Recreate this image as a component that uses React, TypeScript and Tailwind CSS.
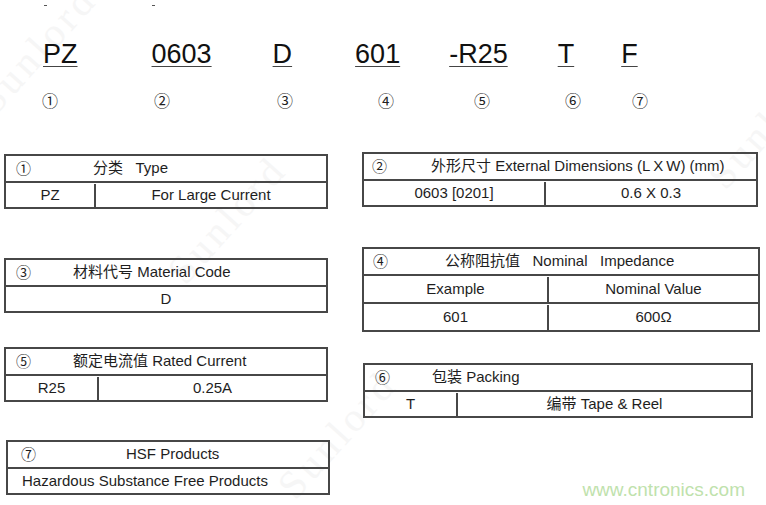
import React from "react";

type Row = { cells: string[]; align?: "left" | "center" };

type SpecProps = {
  num: string;
  title: string;
  titleAt: number; // px from outer left edge to title start
  numPad: string;
  width: string;
  split?: string; // width of first column
  rowH?: string;
  rows: Row[];
  className?: string;
};

const marks = [
  { ml: "ml-[44px]" },
  { ml: "ml-[105px]" },
];

const codes = [
  { text: "PZ", ml: "ml-[43px]" },
  { text: "0603", ml: "ml-[74px]" },
  { text: "D", ml: "ml-[61px]" },
  { text: "601", ml: "ml-[63px]" },
  { text: "-R25", ml: "ml-[49px]" },
  { text: "T", ml: "ml-[50px]" },
  { text: "F", ml: "ml-[47px]" },
];

const circles = [
  { text: "①", ml: "ml-[42px]" },
  { text: "②", ml: "ml-[96px]" },
  { text: "③", ml: "ml-[107px]" },
  { text: "④", ml: "ml-[85px]" },
  { text: "⑤", ml: "ml-[80px]" },
  { text: "⑥", ml: "ml-[75px]" },
  { text: "⑦", ml: "ml-[51px]" },
];

const SpecTable = ({ num, title, titleAt, numPad, width, split, rowH, rows, className }: SpecProps) => {
  return (
    <div className={`${width} border-2 border-[#474747] text-[#1e1e1e] ${className ?? ""}`}>
      <div className="flex h-[25px] items-center">
        <span
          className={`${numPad} shrink-0 -translate-y-[1px] text-[15px] leading-none font-['Noto_Sans_CJK_SC',sans-serif]`}
          style={{ width: titleAt - 2 }}
        >
          {num}
        </span>
        <span className="whitespace-pre">{title}</span>
      </div>
      {rows.map((row, i) => (
        <div key={i} className={`flex ${rowH ?? "h-[26px]"} border-t-2 border-[#474747] pt-[1px]`}>
          {row.cells.map((cell, j) => (
            <div
              key={j}
              className={`flex items-center ${
                row.align === "left" ? "justify-start pl-[14px]" : "justify-center"
              } ${row.cells.length > 1 && j === 0 ? `${split} shrink-0 border-r-2 border-[#474747]` : "flex-1"}`}
            >
              {cell}
            </div>
          ))}
        </div>
      ))}
    </div>
  );
};

const Watermark = ({ className }: { className: string }) => (
  <div
    className={`pointer-events-none absolute -rotate-[48deg] font-['Liberation_Serif',serif] text-[40px] tracking-[4px] text-[#f6f6f6] ${className}`}
  >
    Sunlord
  </div>
);

export default function App() {
  return (
    <div className="relative h-[505px] w-[766px] overflow-hidden bg-white pt-[5px] font-['Liberation_Sans','Noto_Sans_CJK_SC',sans-serif] text-[15px] text-[#1e1e1e]">
      <Watermark className="left-[-40px] top-[20px]" />
      <Watermark className="left-[150px] top-[190px]" />
      <Watermark className="left-[260px] top-[405px]" />
      <Watermark className="left-[690px] top-[95px]" />

      <div className="relative">
        {/* tiny ticks at top */}
        <div className="flex h-[2px]">
          {marks.map((m, i) => (
            <span key={i} className={`${m.ml} h-[1px] w-[3px] bg-[#555]`} />
          ))}
        </div>

        {/* part number */}
        <div className="mt-[32px] flex h-[31px] text-[27px] leading-[31px] text-[#111]">
          {codes.map((c) => (
            <span key={c.text} className={`${c.ml} underline decoration-[#444] decoration-1 underline-offset-[3px]`}>
              {c.text}
            </span>
          ))}
        </div>

        <div className="mt-[22px] flex h-[16px] font-['Noto_Sans_CJK_SC',sans-serif] text-[16px] leading-[16px] text-[#222]">
          {circles.map((c) => (
            <span key={c.text} className={c.ml}>
              {c.text}
            </span>
          ))}
        </div>

        {/* spec tables */}
        <div className="mt-[44px] flex items-start">
          <div className="ml-[4px] flex w-[326px] flex-col pt-[2px]">
            <SpecTable
              num="①"
              title={"分类   Type"}
              titleAt={89}
              numPad="pl-[10px]"
              width="w-[324px]"
              split="w-[90px]"
              rows={[{ cells: ["PZ", "For Large Current"] }]}
            />
            <SpecTable
              className="mt-[49px]"
              num="③"
              title="材料代号 Material Code"
              titleAt={69}
              numPad="pl-[10px]"
              width="w-[324px]"
              rows={[{ cells: ["D"] }]}
            />
            <SpecTable
              className="mt-[34px]"
              num="⑤"
              title="额定电流值 Rated Current"
              titleAt={69}
              numPad="pl-[10px]"
              width="w-[324px]"
              split="w-[93px]"
              rows={[{ cells: ["R25", "0.25A"] }]}
            />
            <SpecTable
              className="ml-[2px] mt-[38px]"
              num="⑦"
              title="HSF Products"
              titleAt={120}
              numPad="pl-[13px]"
              width="w-[324px]"
              rows={[{ cells: ["Hazardous Substance Free Products"], align: "left" }]}
            />
          </div>

          <div className="ml-[32px] flex flex-col">
            <SpecTable
              num="②"
              title={"外形尺寸 External Dimensions (L\u2009X\u2009W) (mm)"}
              titleAt={69}
              numPad="pl-[8px]"
              width="w-[396px]"
              split="w-[182px]"
              rows={[{ cells: ["0603 [0201]", "0.6 X 0.3"] }]}
            />
            <SpecTable
              className="mt-[40px]"
              num="④"
              title={"公称阻抗值   Nominal   Impedance"}
              titleAt={83}
              numPad="pl-[9px]"
              width="w-[398px]"
              split="w-[185px]"
              rowH="h-[28px]"
              rows={[
                { cells: ["Example", "Nominal Value"] },
                { cells: ["601", "600Ω"] },
              ]}
            />
            <SpecTable
              className="ml-[1px] mt-[31px]"
              num="⑥"
              title="包装 Packing"
              titleAt={69}
              numPad="pl-[10px]"
              width="w-[390px]"
              split="w-[93px]"
              rows={[{ cells: ["T", "编带  Tape & Reel"] }]}
            />
          </div>
        </div>
      </div>

      <div className="absolute bottom-[6px] right-[21px] text-[19px] leading-none text-[#bfe2ad]">
        www.cntronics.com
      </div>
    </div>
  );
}
